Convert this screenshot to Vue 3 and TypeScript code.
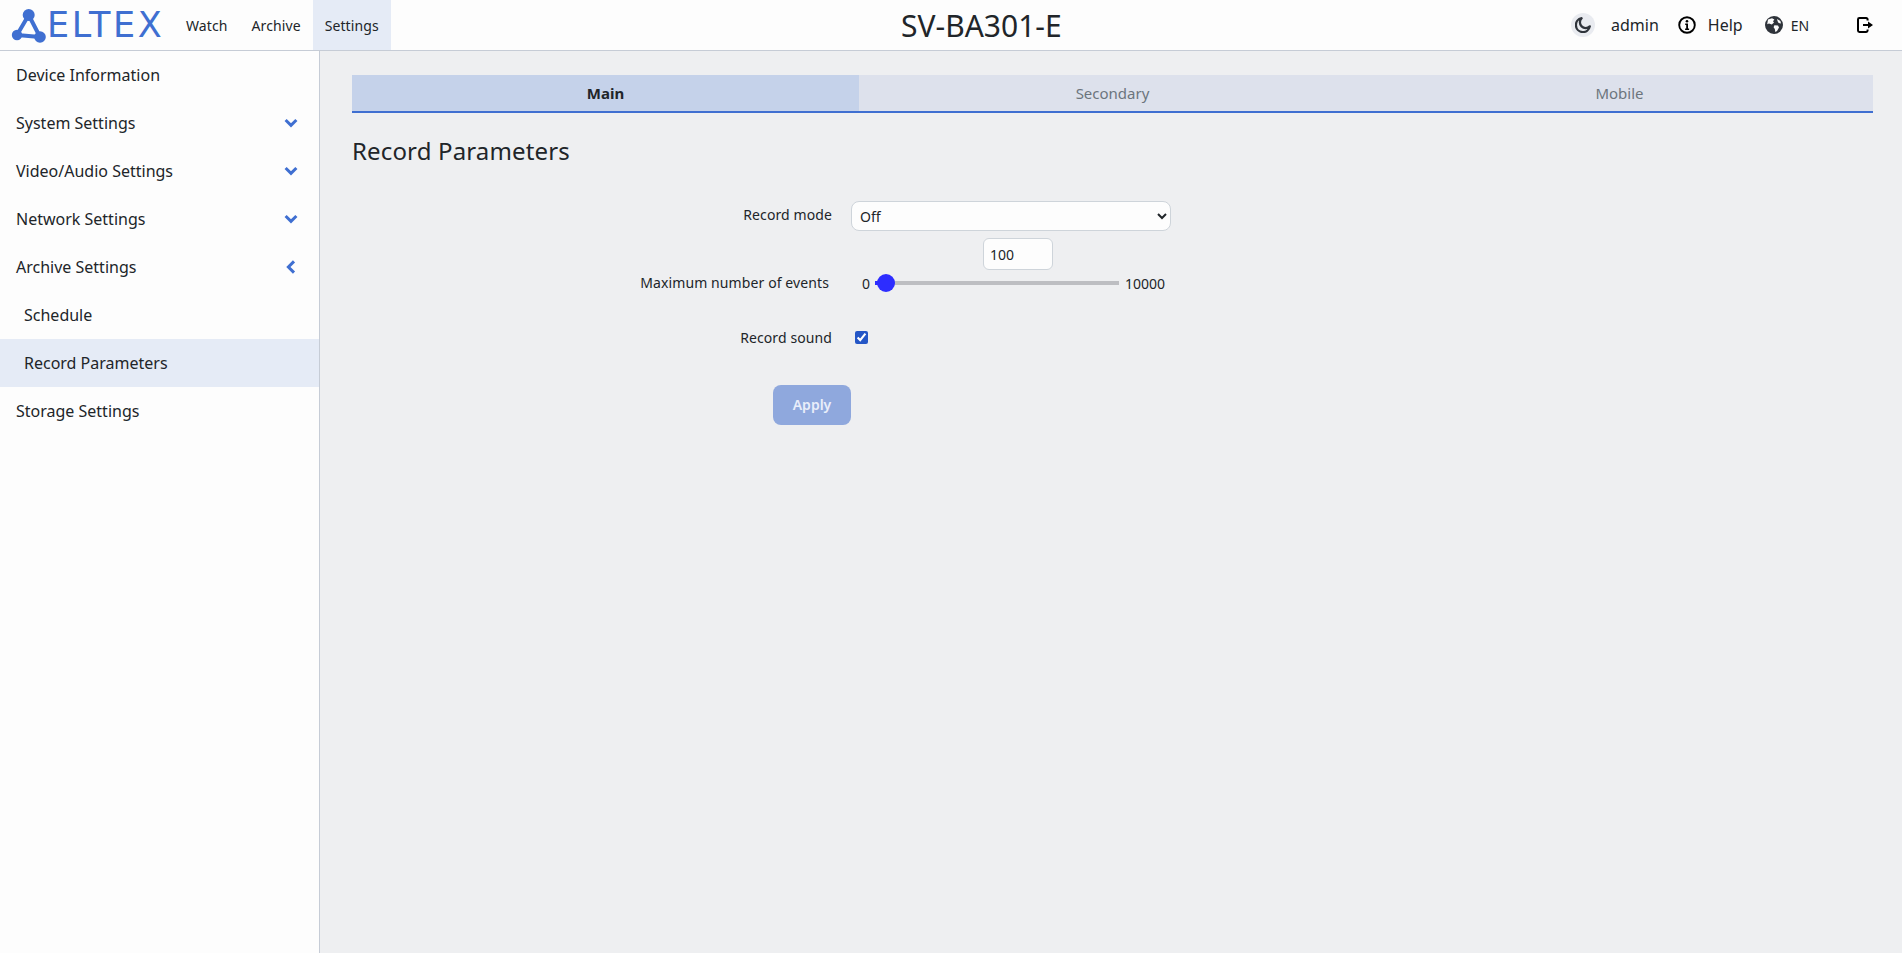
<script setup lang="ts">
const topNav = [
  { label: 'Watch', active: false },
  { label: 'Archive', active: false },
  { label: 'Settings', active: true },
]

// chevron: '' none, 'down' closed group, 'left' open group
const menu = [
  { label: 'Device Information', chevron: '', sub: false, active: false },
  { label: 'System Settings', chevron: 'down', sub: false, active: false },
  { label: 'Video/Audio Settings', chevron: 'down', sub: false, active: false },
  { label: 'Network Settings', chevron: 'down', sub: false, active: false },
  { label: 'Archive Settings', chevron: 'left', sub: false, active: false },
  { label: 'Schedule', chevron: '', sub: true, active: false },
  { label: 'Record Parameters', chevron: '', sub: true, active: true },
  { label: 'Storage Settings', chevron: '', sub: false, active: false },
]

const tabs = ['Main', 'Secondary', 'Mobile']
</script>

<template>
  <div class="page">
    <header class="topbar">
      <div class="top-left">
        <a class="logo">
          <svg class="logo-mark" width="38" height="38" viewBox="0 0 38 38">
            <path d="M18.7 9 L7 29 L30 31 Z" fill="none" stroke="#3f6fd1" stroke-width="4" stroke-linejoin="round" />
            <circle cx="18.7" cy="9" r="6" fill="#3f6fd1" />
            <circle cx="7" cy="29" r="5.2" fill="#3f6fd1" />
            <circle cx="30" cy="31" r="5.8" fill="#3f6fd1" />
          </svg>
          <span class="logo-text">ELTEX</span>
        </a>
        <nav class="top-nav">
          <a v-for="item in topNav" :key="item.label" class="top-link" :class="{ active: item.active }">{{ item.label }}</a>
        </nav>
      </div>

      <div class="device-name">SV-BA301-E</div>

      <div class="top-right">
        <span class="theme-btn">
          <svg width="16" height="16" viewBox="0 0 16 16">
            <path d="M6.6 1.2 A7 7 0 1 0 14.8 9.4 A5.6 5.6 0 0 1 6.6 1.2 Z" fill="none" stroke="#2f343b" stroke-width="2.3" stroke-linejoin="round" />
          </svg>
        </span>
        <span class="user">admin</span>
        <svg class="info-icon" width="18" height="18" viewBox="0 0 18 18">
          <circle cx="9" cy="9" r="7.8" fill="none" stroke="#000" stroke-width="1.9" />
          <circle cx="9" cy="5.2" r="1.3" fill="#000" />
          <path d="M7.2 7.6 H10 V12.6 H11.1 V14 H7.1 V12.6 H8.2 V9 H7.2 Z" fill="#000" />
        </svg>
        <span class="help">Help</span>
        <svg class="globe-icon" width="18" height="18" viewBox="0 0 18 18">
          <circle cx="9" cy="9" r="9" fill="#2f343b" />
          <path d="M3 3.6 L7 2.2 L9.4 3.4 L8 5.2 L9 6.6 L6.8 8.6 L4 7.4 L2.2 8.2 Z M9.4 9.2 L13 9.6 L14 11.4 L12 15 L10.4 16 L9.8 13 L8.6 11.2 Z M12 3 L15.4 5 L16 7.6 L13.6 7 L12.6 5.2 Z" fill="#fdfdfd" />
        </svg>
        <span class="lang">EN</span>
        <svg class="logout-icon" width="16" height="16" viewBox="0 0 16 16">
          <path d="M10.6 3.6 V2.4 A1.4 1.4 0 0 0 9.2 1 H2.4 A1.4 1.4 0 0 0 1 2.4 V13.6 A1.4 1.4 0 0 0 2.4 15 H9.2 A1.4 1.4 0 0 0 10.6 13.6 V12.4" fill="none" stroke="#000" stroke-width="2" />
          <path d="M6 6.9 H11 V4.4 L16 8 L11 11.6 V9.1 H6 Z" fill="#000" />
        </svg>
      </div>
    </header>

    <div class="body">
      <aside class="sidebar">
        <a
          v-for="item in menu"
          :key="item.label"
          class="menu-item"
          :class="{ sub: item.sub, active: item.active }"
        >
          <span>{{ item.label }}</span>
          <svg v-if="item.chevron === 'down'" class="chevron" width="14" height="10" viewBox="0 0 14 10">
            <path d="M1.6 2 L7 7.4 L12.4 2" fill="none" stroke="#3f6fd1" stroke-width="3" />
          </svg>
          <svg v-else-if="item.chevron === 'left'" class="chevron" width="14" height="14" viewBox="0 0 14 14">
            <path d="M10 1.4 L4.4 7 L10 12.6" fill="none" stroke="#3f6fd1" stroke-width="3" />
          </svg>
        </a>
      </aside>

      <main class="content">
        <div class="tabs">
          <div v-for="(tab, i) in tabs" :key="tab" class="tab" :class="{ current: i === 0 }">{{ tab }}</div>
        </div>

        <h2 class="section-title">Record Parameters</h2>

        <form class="form" @submit.prevent>
          <div class="row row-select">
            <label class="label label-select">Record mode</label>
            <select class="select">
              <option>Off</option>
              <option>Continuous</option>
              <option>By event</option>
            </select>
          </div>

          <div class="row row-range">
            <label class="label label-range">Maximum number of events</label>
            <div class="range-wrap">
              <input class="range-value" type="text" value="100" />
              <div class="range-line">
                <span class="range-min">0</span>
                <input class="range" type="range" min="0" max="10000" value="100" />
                <span class="range-max">10000</span>
              </div>
            </div>
          </div>

          <div class="row row-check">
            <label class="label">Record sound</label>
            <input class="check" type="checkbox" checked />
          </div>

          <div class="row-apply">
            <button class="apply" type="button">Apply</button>
          </div>
        </form>
      </main>
    </div>
  </div>
</template>

<style>
html,
body {
  margin: 0;
  height: 100%;
}
</style>

<style scoped>
.page {
  height: 100vh;
  display: flex;
  flex-direction: column;
  font-family: 'Noto Sans', 'Open Sans', sans-serif;
  font-size: 16px;
  color: #212529;
  background: #eeeff1;
  overflow: hidden;
}

/* шапка */
.topbar {
  height: 50px;
  flex: none;
  display: flex;
  justify-content: space-between;
  align-items: center;
  background: #fdfdfd;
  border-bottom: 1px solid #c6ccd6;
}

.top-left {
  display: flex;
  align-items: center;
  height: 100%;
}

.logo {
  display: flex;
  align-items: center;
  width: 174px;
  padding-left: 10px;
  box-sizing: border-box;
}

.logo-mark {
  flex: none;
  margin-right: -1px;
}

.logo-text {
  font-family: 'DejaVu Sans', 'Noto Sans', sans-serif;
  font-size: 35px;
  line-height: 1;
  letter-spacing: 2.6px;
  color: #3f6fd1;
}

.top-nav {
  display: flex;
  height: 100%;
}

.top-link {
  display: flex;
  align-items: center;
  padding: 0 12px;
  font-size: 14px;
  letter-spacing: 0.1px;
}

.top-link.active {
  background: #e5ebf6;
}

.device-name {
  font-size: 30px;
  line-height: 1;
  padding-top: 2px;
}

.top-right {
  display: flex;
  align-items: center;
  width: 330px;
  box-sizing: border-box;
}

.theme-btn {
  display: flex;
  align-items: center;
  justify-content: center;
  width: 24px;
  height: 24px;
  margin-left: -1px;
  border-radius: 50%;
  background: #e9ebf0;
}

.user {
  margin-left: 16px;
}

.info-icon {
  margin-left: 19px;
}

.help {
  margin-left: 12px;
}

.globe-icon {
  margin-left: 22px;
}

.lang {
  margin-left: 8px;
  font-size: 14px;
}

.logout-icon {
  margin-left: 48px;
}

/* боковое меню и контент */
.body {
  flex: 1;
  display: flex;
  min-height: 0;
}

.sidebar {
  width: 319px;
  flex: none;
  background: #fdfdfd;
  border-right: 1px solid #c6ccd6;
}

.menu-item {
  height: 48px;
  display: flex;
  align-items: center;
  justify-content: space-between;
  padding: 0 21px 0 16px;
}

.menu-item.sub {
  padding-left: 24px;
}

.menu-item.active {
  background: #e5ebf6;
}

.content {
  flex: 1;
  min-width: 0;
  padding: 24px 29px 0 32px;
}

.tabs {
  display: grid;
  grid-template-columns: repeat(3, 1fr);
  border-bottom: 2px solid #3f6fd1;
}

.tab {
  height: 36px;
  display: flex;
  align-items: center;
  justify-content: center;
  font-size: 15px;
  color: #6c757d;
  background: #dde1ec;
}

.tab.current {
  font-weight: 700;
  color: #212529;
  background: #c5d2ea;
}

.section-title {
  margin: 22px 0 0;
  font-size: 24px;
  font-weight: 400;
  line-height: 32px;
  letter-spacing: 0.15px;
}

.form {
  margin-top: 34px;
  font-size: 14px;
}

.row {
  display: flex;
}

.label {
  width: 480px;
  flex: none;
  text-align: right;
  letter-spacing: 0.1px;
}

.label-select {
  padding-bottom: 3px;
}

.row-select {
  align-items: center;
  height: 30px;
}

.select {
  width: 320px;
  height: 30px;
  margin-left: 19px;
  padding: 0 4px;
  font: inherit;
  color: #212529;
  background: #fdfdfd;
  border: 1px solid #ced4da;
  border-radius: 8px;
}

.row-range {
  margin-top: 7px;
}

.label-range {
  width: 477px;
  padding-top: 35px;
}

.range-wrap {
  width: 320px;
  margin-left: 22px;
  display: flex;
  flex-direction: column;
}

.range-value {
  width: 70px;
  height: 32px;
  box-sizing: border-box;
  align-self: flex-start;
  margin-left: 132px;
  padding: 0 6px;
  font: inherit;
  color: #212529;
  background: #fdfdfd;
  border: 1px solid #ced4da;
  border-radius: 6px;
}

.range-line {
  display: flex;
  align-items: center;
  height: 26px;
}

.range-min {
  width: 24px;
  padding-left: 11px;
  box-sizing: border-box;
}

.range {
  -webkit-appearance: none;
  appearance: none;
  width: 244px;
  height: 18px;
  margin: 0;
  background: transparent;
}

.range::-webkit-slider-runnable-track {
  height: 4px;
  background: linear-gradient(to right, #2d2dff 0 11px, #bdbec2 11px);
}

.range::-webkit-slider-thumb {
  -webkit-appearance: none;
  width: 18px;
  height: 18px;
  margin-top: -7px;
  border-radius: 50%;
  background: #2d2dff;
}

.range-max {
  margin-left: 6px;
}

.row-check {
  align-items: center;
  height: 20px;
  margin-top: 31px;
}

.check {
  width: 13px;
  height: 13px;
  margin: 0 0 0 23px;
  accent-color: #2456c6;
}

.row-apply {
  width: 499px;
  margin-top: 38px;
  display: flex;
  justify-content: flex-end;
}

.apply {
  width: 78px;
  height: 40px;
  padding: 0 0 2px;
  font: inherit;
  font-weight: 600;
  color: #e9eefa;
  background: #8fa8dd;
  border: none;
  border-radius: 8px;
}
</style>
